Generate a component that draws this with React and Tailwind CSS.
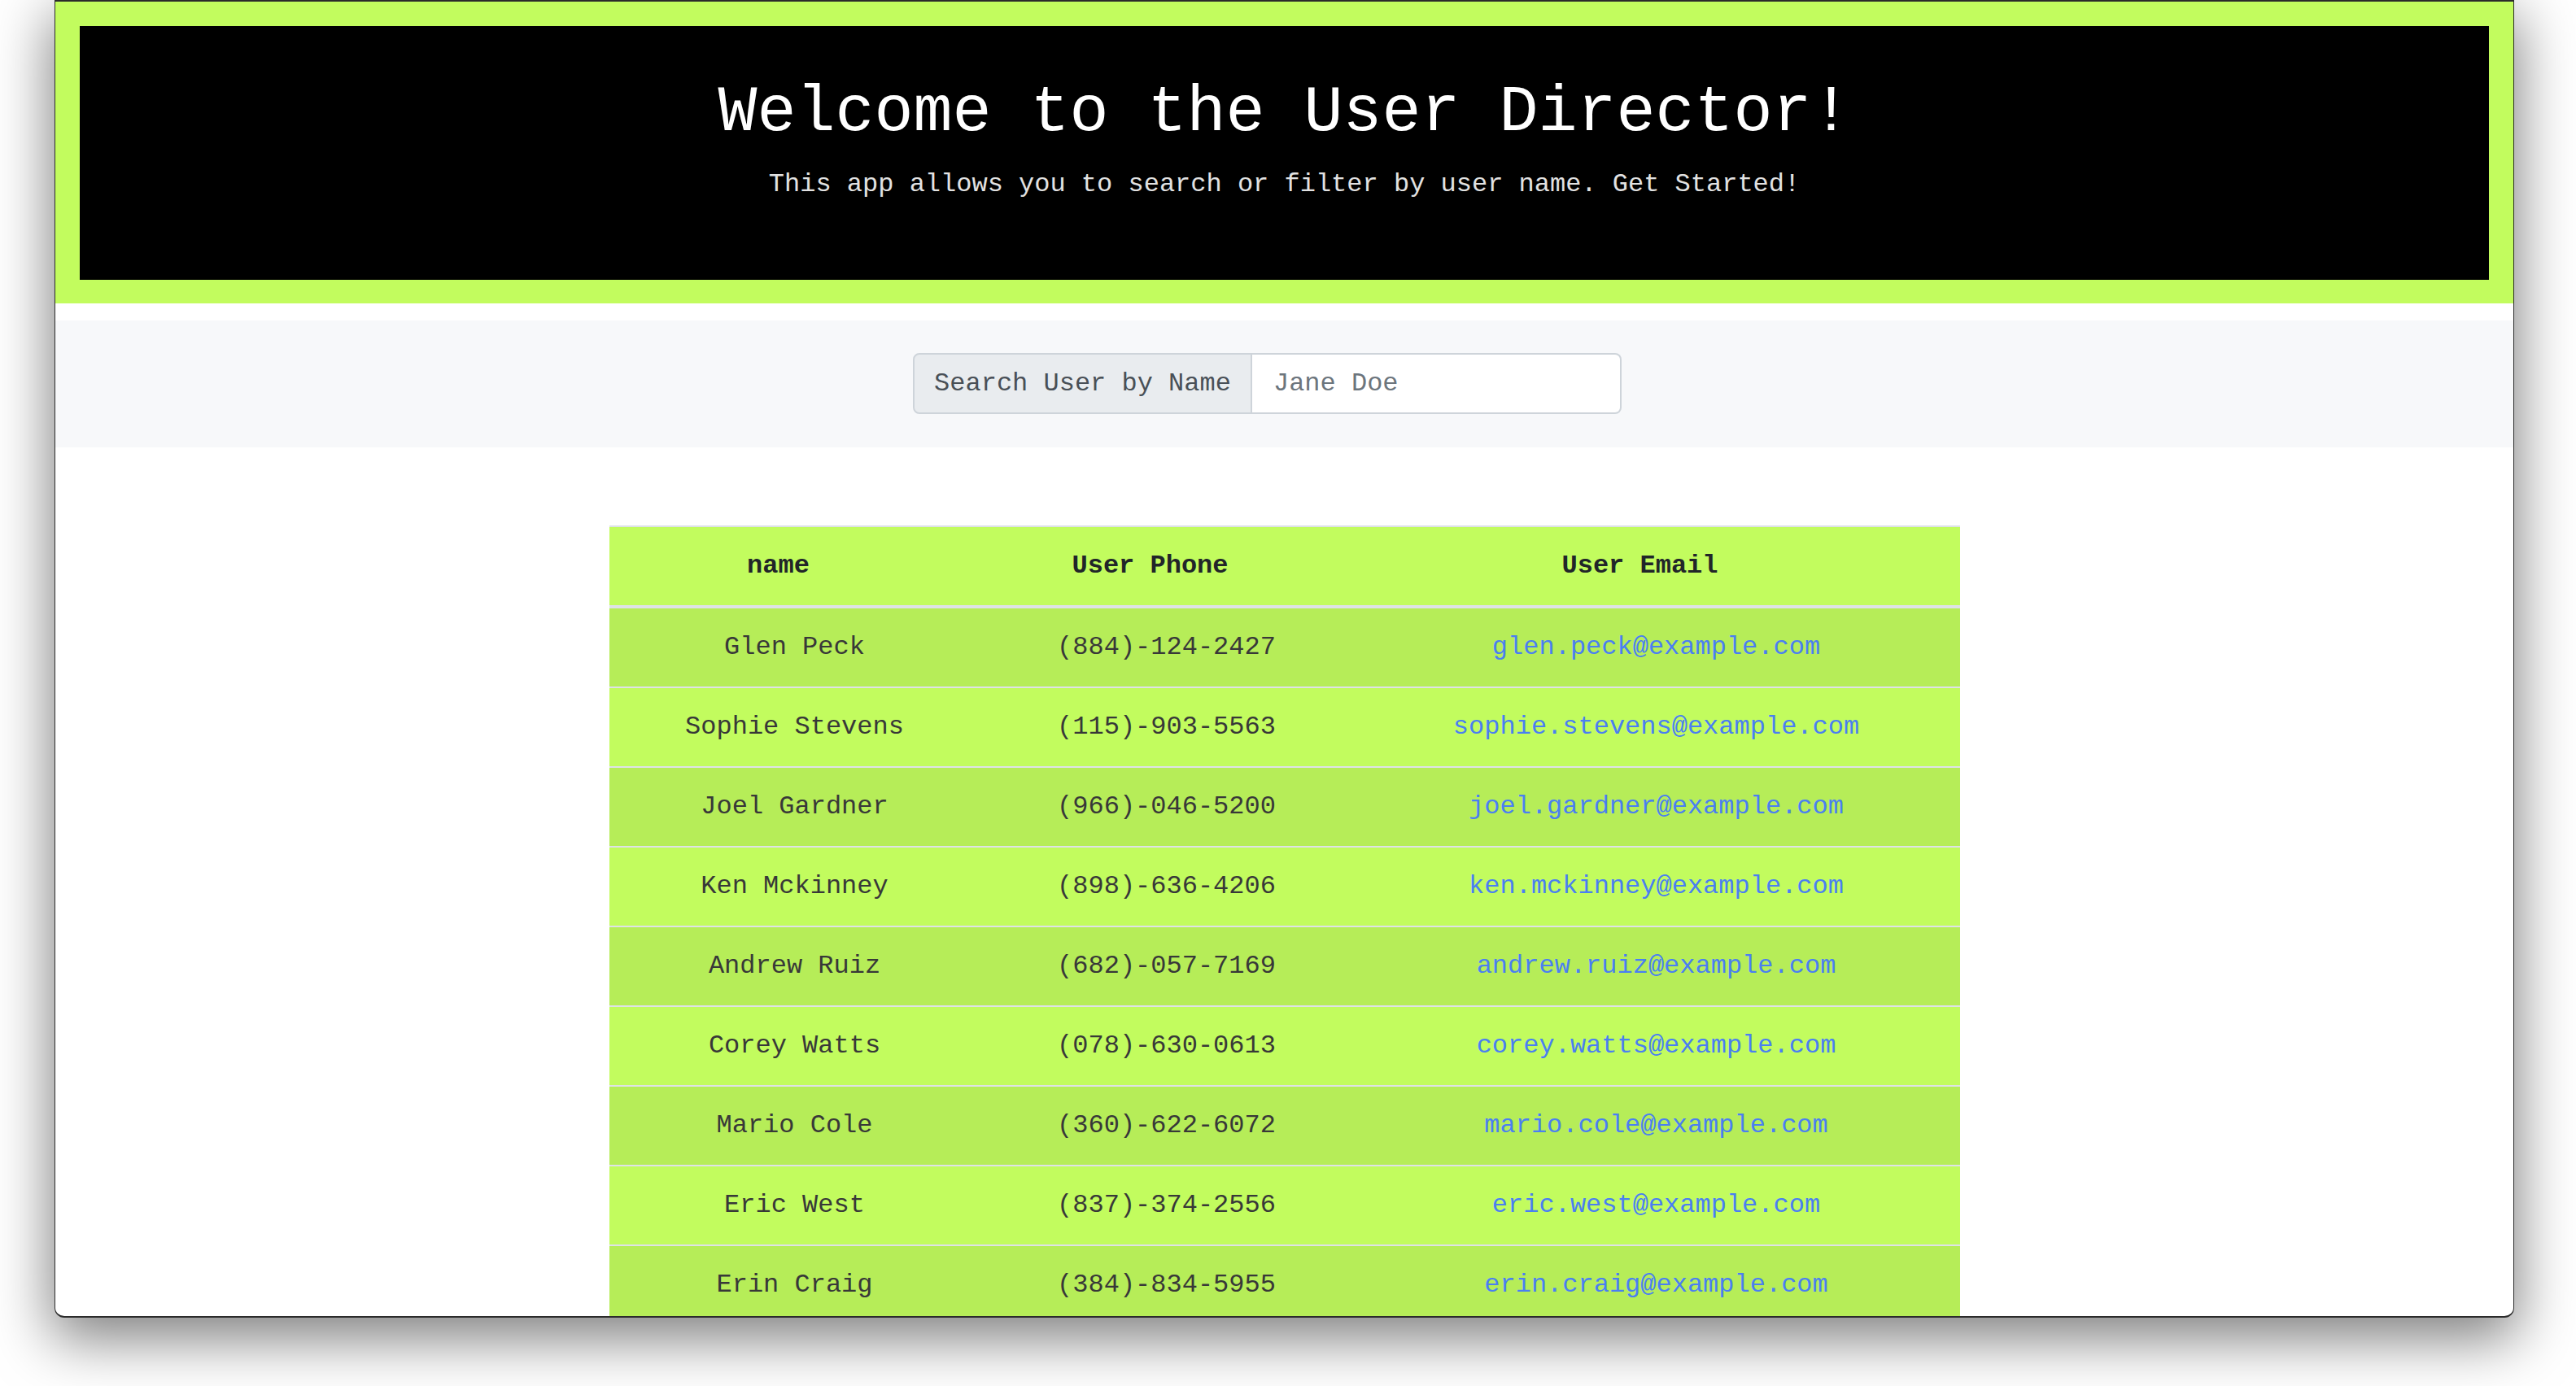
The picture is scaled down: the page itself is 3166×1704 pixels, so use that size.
const users = [
  { name: "Glen Peck", phone: "(884)-124-2427", email: "glen.peck@example.com" },
  { name: "Sophie Stevens", phone: "(115)-903-5563", email: "sophie.stevens@example.com" },
  { name: "Joel Gardner", phone: "(966)-046-5200", email: "joel.gardner@example.com" },
  { name: "Ken Mckinney", phone: "(898)-636-4206", email: "ken.mckinney@example.com" },
  { name: "Andrew Ruiz", phone: "(682)-057-7169", email: "andrew.ruiz@example.com" },
  { name: "Corey Watts", phone: "(078)-630-0613", email: "corey.watts@example.com" },
  { name: "Mario Cole", phone: "(360)-622-6072", email: "mario.cole@example.com" },
  { name: "Eric West", phone: "(837)-374-2556", email: "eric.west@example.com" },
  { name: "Erin Craig", phone: "(384)-834-5955", email: "erin.craig@example.com" },
];

export default function App() {
  return (
    <div className="h-[1704px] w-[3166px] bg-white pl-[67px] overflow-hidden font-['Liberation_Mono','Courier_New',monospace]">
      <div className="w-[3023px] h-[1620px] overflow-hidden bg-white border-x border-t-2 border-b-2 border-[#2b2b2b] rounded-b-[12px] shadow-[0_22px_70px_4px_rgba(0,0,0,0.5)]">

        {/* Header */}
        <header className="bg-[#c2fc5e] pt-[30px] pb-[29px] px-[30px]">
          <div className="bg-black text-center pt-[59px] pb-[61px]">
            <h1 className="text-[80px] leading-[96px] mb-[16px] text-white font-normal">
              Welcome to the User Director!
            </h1>
            <p className="text-[32px] leading-[48px] mb-[32px] text-[#e2e2e2]">
              This app allows you to search or filter by user name. Get Started!
            </p>
          </div>
        </header>

        <div className="h-[21px] bg-white" />

        {/* Search */}
        <div className="bg-[#f7f8fa] pt-[40px] pb-[41px] flex justify-center pr-[42px]">
          <div className="flex h-[75px]">
            <span className="flex items-center border-2 border-[#ced4da] rounded-l-[8px] bg-[#e9ecef] px-[24px] text-[32px] text-[#495057]">
              Search User by Name
            </span>
            <input
              type="text"
              placeholder="Jane Doe"
              className="w-[454px] border-2 border-l-0 border-[#ced4da] rounded-r-[8px] bg-white px-[26px] text-[32px] text-[#495057] placeholder:text-[#6c757d] outline-none"
            />
          </div>
        </div>

        {/* Table */}
        <table className="w-[1660px] mx-auto mt-[96px] border-collapse table-fixed text-[32px] leading-[48px]">
          <colgroup>
            <col className="w-[456px]" />
            <col className="w-[458px]" />
            <col className="w-[746px]" />
          </colgroup>
          <thead>
            <tr className="bg-[#c2fc5e] text-[#212529]">
              <th className="border-t-2 border-b-4 border-[#dee2e6] pl-[24px] pr-[64px] py-[24px] font-bold text-center">name</th>
              <th className="border-t-2 border-b-4 border-[#dee2e6] pl-[24px] pr-[64px] py-[24px] font-bold text-center">User Phone</th>
              <th className="border-t-2 border-b-4 border-[#dee2e6] pl-[24px] pr-[64px] py-[24px] font-bold text-center">User Email</th>
            </tr>
          </thead>
          <tbody>
            {users.map((u, i) => (
              <tr key={u.email} className={i % 2 === 0 ? "bg-[#b6ed58]" : "bg-[#c2fc5e]"}>
                <td className="border-t-2 border-[#dee2e6] px-[24px] py-[24px] text-center text-[#383838]">{u.name}</td>
                <td className="border-t-2 border-[#dee2e6] px-[24px] py-[24px] text-center text-[#383838]">{u.phone}</td>
                <td className="border-t-2 border-[#dee2e6] px-[24px] py-[24px] text-center text-[#4a7ff2]">{u.email}</td>
              </tr>
            ))}
          </tbody>
        </table>
      </div>
    </div>
  );
}
